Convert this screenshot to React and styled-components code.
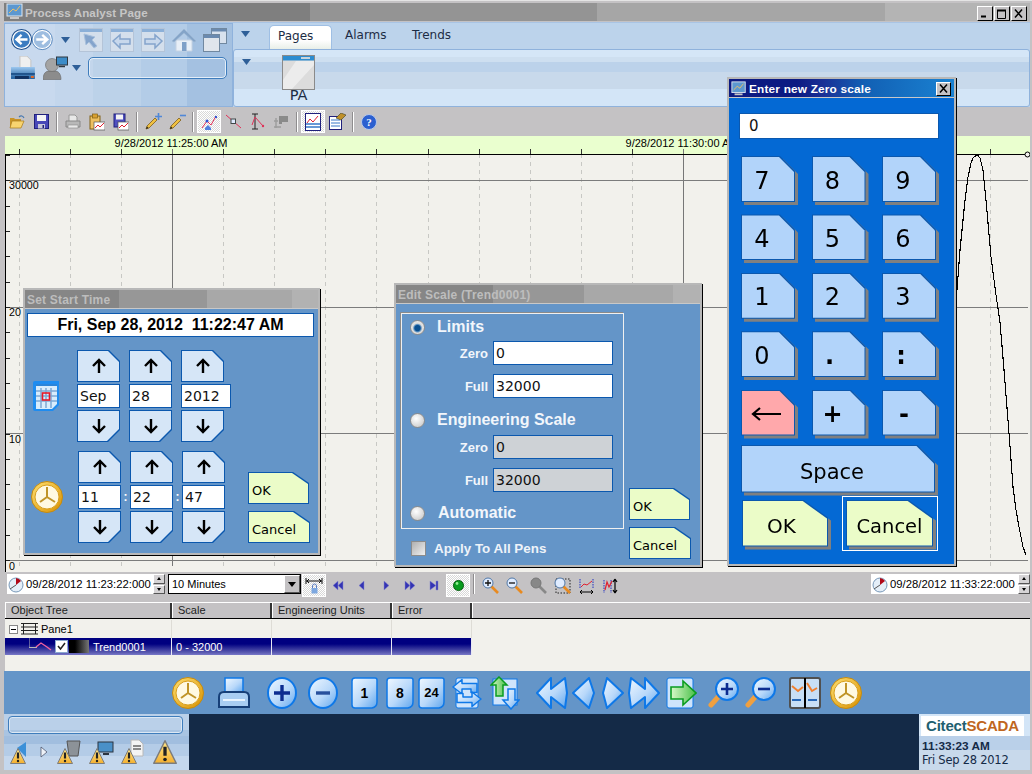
import React from 'react';
import styled, { createGlobalStyle } from 'styled-components';

const GlobalStyle = createGlobalStyle`
  html, body { margin: 0; padding: 0; background: #c4c2c4; }
  #root { width: 1032px; height: 774px; overflow: hidden; }
  * { box-sizing: border-box; }
`;

const arial = '"Liberation Sans", Arial, sans-serif';
const verdana = '"DejaVu Sans", Verdana, sans-serif';

const Screen = styled.div`
  position: relative;
  width: 1032px;
  height: 774px;
  display: flex;
  flex-direction: column;
  background: #c4c2c4;
  box-shadow: inset 0 1px 0 #e4e4e4;
  padding: 3px 2px 4px 4px;
  font-family: ${arial};
  overflow: hidden;
`;

const TitleBar = styled.div`
  flex: none;
  height: 18px;
  display: flex;
  align-items: center;
  padding-right: 3px;
  background: linear-gradient(90deg, #7f7f7f 0 306px, #949494 306px 593px, #a6a6a6 593px 881px, #b4b4b4 881px);
`;

const AppIcon = styled.svg`
  flex: none;
  margin-left: ${p => p.$ml || 0}px;
`;

const AppTitle = styled.span`
  margin-left: 1px;
  flex: 1;
  font: bold 11.6px ${arial};
  letter-spacing: 0.1px;
  color: #c6c6c6;
`;

const WinButton = styled.button`
  width: 16px;
  height: 15px;
  padding: 0;
  margin-left: 1px;
  align-self: flex-end;
  display: flex;
  align-items: center;
  justify-content: center;
  background: #c4c2c4;
  border: 1px solid;
  border-color: #fff #000 #000 #fff;
`;

const Ribbon = styled.div`
  flex: none;
  height: 85px;
  margin-top: 1px;
  display: flex;
  border-top: 1px solid #a9c4e4;
`;

const QuickPanel = styled.div`
  width: 229px;
  flex: none;
  padding: 3px 5px 0 6px;
  border: 1px solid #8fb2dc;
  background: linear-gradient(90deg, #c8d9ee 0 50px, #c3d6ec 50px 88px, #bcd2e9 88px 136px, #b3cce7 136px 182px, #a4c1e1 182px);
`;

const QuickRow = styled.div`
  display: flex;
  align-items: center;
  margin-bottom: ${p => p.$mb || 0}px;
`;

const QuickSlot = styled.span`
  display: flex;
  flex: none;
  align-self: ${p => p.$self || 'center'};
  margin-left: ${p => p.$ml || 0}px;
  margin-top: ${p => p.$mt || 0}px;
`;

const AddressBox = styled.div`
  width: 140px;
  height: 22px;
  margin-left: 7px;
  border: 1.5px solid #3f7dbc;
  border-radius: 5px;
  box-shadow: inset 0 0 0 1px #e4eef8;
`;

const PagesPanel = styled.div`
  flex: 1;
  display: flex;
  flex-direction: column;
  background: #bcd3eb;
`;

const TabStrip = styled.div`
  height: 26px;
  flex: none;
  display: flex;
  align-items: flex-end;
  padding-left: 8px;
`;

const Tab = styled.div`
  height: 24px;
  width: ${p => p.$w}px;
  margin-left: ${p => p.$ml || 0}px;
  padding: 3px 0 0 ${p => p.$pad}px;
  font: 12px ${verdana};
  color: #1c2c44;
  ${p => p.$active && `
    background: linear-gradient(#fff 0 60%, #e8efe8 100%);
    border: 1px solid #9fbfe4;
    border-bottom: 0;
    border-radius: 5px 5px 0 0;
  `}
`;

const PagesBody = styled.div`
  flex: 1;
  display: flex;
  padding: 5px 0 0 8px;
  border: 1px solid #8fb2dc;
  border-radius: 3px;
  background: linear-gradient(#d5e6f7 0 7px, #cedff0 7px 12px, #bcd2ea 12px 22px, #c8d9eb 22px 39px, #d3e5f7 39px);
`;

const PageItem = styled.div`
  display: flex;
  flex-direction: column;
  align-items: center;
  margin-left: 31px;
  font: 14.5px ${verdana};
  color: #1c2c44;
`;

const PageLabel = styled.span`
  margin-top: -2px;
  line-height: 15px;
`;

const ToolBar = styled.div`
  flex: none;
  height: 29px;
  display: flex;
  align-items: center;
  padding-left: 1px;
`;

const ToolSlot = styled.div`
  width: 24px;
  height: 23px;
  flex: none;
  display: flex;
  align-items: center;
  justify-content: center;
  ${p => p.$on && `
    border: 1px solid #fff;
    background: repeating-conic-gradient(#d8d8d8 0 25%, #ffffff 0 50%) 0 0 / 2px 2px;
  `}
`;

const ToolSep = styled.span`
  width: 2px;
  height: 20px;
  margin: 0 3px;
  flex: none;
  background: linear-gradient(90deg, #8e8c8e 50%, #fff 50%);
`;

const ChartWrap = styled.div`
  flex: none;
  height: 436px;
  margin-left: 1px;
`;

const ChartSvg = styled.svg`
  display: block;
  font-family: ${arial};
`;

const TrendBar = styled.div`
  flex: none;
  height: 30px;
  display: flex;
  align-items: flex-start;
  padding: 2px 0 0 3px;
`;

const DateBox = styled.div`
  width: ${p => p.$w || 146}px;
  height: 20px;
  flex: none;
  display: flex;
  align-items: center;
  gap: 2px;
  padding-left: 1px;
  margin-left: ${p => p.$ml || 0}px;
  background: #fff;
  font: 11.3px ${arial};
  color: #000;
  white-space: nowrap;
`;

const SpinStack = styled.div`
  width: 12px;
  height: 20px;
  flex: none;
  display: flex;
  flex-direction: column;
  gap: 1px;
`;

const SpinTiny = styled.div`
  flex: 1;
  display: flex;
  align-items: center;
  justify-content: center;
  background: #d6d4d6;
  border: 1px solid;
  border-color: #fff #555 #555 #fff;
  &::after {
    content: '';
    border: 2.5px solid transparent;
    ${p => (p.$down ? 'border-top: 3px solid #000; margin-top: 2px;' : 'border-bottom: 3px solid #000; margin-bottom: 2px;')}
  }
`;

const Combo = styled.div`
  width: 133px;
  height: 20px;
  flex: none;
  margin-left: 3px;
  display: flex;
  align-items: center;
  justify-content: space-between;
  padding-left: 3px;
  background: #fff;
  border: 1px solid #000;
  font: 11px ${arial};
`;

const ComboArrow = styled.span`
  width: 16px;
  height: 18px;
  display: flex;
  align-items: center;
  justify-content: center;
  background: #c4c2c4;
  border: 1px solid;
  border-color: #fff #555 #555 #fff;
  &::after {
    content: '';
    border: 4px solid transparent;
    border-top: 5px solid #000;
    margin-top: 4px;
  }
`;

const BarSlot = styled(ToolSlot)`
  margin-left: ${p => p.$ml || 0}px;
`;

const Spacer = styled.div`
  flex: 1;
`;

const TreePane = styled.div`
  flex: none;
  height: 69px;
  margin-left: 1px;
  background: #f2f1ec;
`;

const TreeHead = styled.div`
  height: 17px;
  margin-bottom: 1px;
  display: flex;
  background: #c4c2c4;
  border-top: 1px solid #fff;
  border-bottom: 1px solid #000;
`;

const HeadCell = styled.div`
  width: ${p => p.$w}px;
  flex: ${p => (p.$w ? 'none' : 1)};
  padding: 1px 0 0 6px;
  font: 11px ${arial};
  color: #222;
  border-right: ${p => (p.$w ? '2px solid #333' : 'none')};
  box-shadow: inset 1px 0 0 #fff;
`;

const TreeRow = styled.div`
  width: 467px;
  height: ${p => p.$h}px;
  display: flex;
  align-items: center;
  ${p => p.$selected && 'background: linear-gradient(#000080 0 35%, #5a5ab0 85%, #7878c8);'}
`;

const TreeCell = styled.div`
  width: ${p => p.$w}px;
  height: 100%;
  flex: none;
  display: flex;
  align-items: center;
  padding-left: ${p => p.$pad || 0}px;
  font: 11px ${arial};
  color: ${p => (p.$selected ? '#fff' : '#000')};
  border-right: 1px solid ${p => (p.$selected ? '#e8e8f4' : '#dedcd6')};
`;

const MinusBox = styled.span`
  width: 9px;
  height: 9px;
  margin: 0 3px 0 4px;
  display: flex;
  align-items: center;
  justify-content: center;
  border: 1px solid #888;
  background: #fff;
  &::after {
    content: '';
    width: 5px;
    height: 1px;
    background: #000;
  }
`;

const TreeIcon = styled.svg`
  flex: none;
  margin-right: ${p => p.$mr || 0}px;
`;

const TreeCheck = styled.span`
  width: 13px;
  height: 13px;
  flex: none;
  display: flex;
  margin-right: 1px;
  background: #fff;
  border: 1px solid #8aa8d0;
`;

const PenSwatch = styled.span`
  width: 20px;
  height: 13px;
  flex: none;
  margin-right: 4px;
  background: linear-gradient(90deg, #000 30%, #777);
`;

const ButtonStrip = styled.div`
  flex: none;
  height: 43px;
  display: flex;
  align-items: center;
  padding-left: 168px;
  background: #6495c8;
`;

const StripSlot = styled.div`
  position: relative;
  flex: none;
  display: flex;
  margin-left: ${p => p.$ml || 0}px;
`;

const PageNumber = styled.span`
  position: absolute;
  inset: 0;
  display: flex;
  align-items: center;
  justify-content: center;
  font: bold ${p => p.$size || 14}px ${arial};
  color: #000;
`;

const StatusBar = styled.div`
  flex: none;
  height: 56px;
  display: flex;
`;

const AlarmPanel = styled.div`
  width: 185px;
  flex: none;
  padding: 2px 0 0 4px;
  background: linear-gradient(#bad0e9 0 16px, #a9c4e2 16px 22px, #a1bedf 22px 30px, #b4cce7 30px 42px, #c4d7ed 42px);
`;

const AlarmBox = styled.div`
  width: 175px;
  height: 18px;
  border: 1.5px solid #3f7dbc;
  border-radius: 4px;
  box-shadow: inset 0 0 0 1px #dce8f4;
`;

const AlarmIcons = styled.svg`
  display: block;
  margin: 4px 0 0 -4px;
`;

const DarkPanel = styled.div`
  width: 730px;
  flex: none;
  background: #142a47;
`;

const ClockPanel = styled.div`
  flex: 1;
  padding: 2px 0 0 2px;
  background: linear-gradient(#d3e5f7 0 22px, #bad0e9 22px 36px, #c8d9eb 36px);
  color: #142a47;
`;

const Logo = styled.div`
  width: 103px;
  height: 20px;
  padding-left: 5px;
  background: #fff;
  font: bold 15px/20px ${arial};
  letter-spacing: -0.2px;
  white-space: nowrap;
`;

const LogoBrand = styled.span`
  color: ${p => p.$color};
`;

const ClockTime = styled.div`
  margin: 3px 0 0 1px;
  font: bold 11.8px/14px ${arial};
`;

const ClockDate = styled.div`
  margin-left: 1px;
  font: 11.5px/14px ${verdana};
  letter-spacing: -0.25px;
`;

/* dialogs float over the page like windows on a desktop */
const Dialog = styled.div`
  position: absolute;
  left: ${p => p.$x}px;
  top: ${p => p.$y}px;
  width: ${p => p.$w}px;
  height: ${p => p.$h}px;
  display: flex;
  flex-direction: column;
  background: ${p => p.$bg || '#6495c8'};
  border: 2px solid #b8b8b8;
  box-shadow: 1px 1px 0 #000;
`;

const DialogTitle = styled.div`
  flex: none;
  height: ${p => p.$h || 19}px;
  padding: 1px 0 0 2px;
  display: flex;
  align-items: center;
  font: bold 12px ${arial};
  letter-spacing: 0.2px;
  color: #bdbdbd;
  border-bottom: 1px solid #c8c8c8;
  background: linear-gradient(90deg, #868686 0 32%, #979797 32% 62%, #a8a8a8 62% 91%, #b2b2b2 91%);
`;

const KeypadTitle = styled(DialogTitle)`
  color: #fff;
  font-size: 11.8px;
  padding-right: 3px;
  gap: 2px;
  background: linear-gradient(90deg, #0c1a82 0 30%, #1a3096 42%, #1260b4 60%, #1a82d2 100%);
`;

const KeypadClose = styled(WinButton)`
  margin-left: auto;
  align-self: center;
  width: 15px;
  height: 14px;
`;

const CaptionText = styled.span`
  flex: 1;
`;

const StartBody = styled.div`
  flex: 1;
  padding: 4px 4px 0 2px;
`;

const DateDisplay = styled.div`
  height: 24px;
  display: flex;
  align-items: center;
  justify-content: center;
  white-space: pre;
  font: bold 16px ${arial};
  color: #000;
  background: #fff;
  border: 1px solid #0b58ae;
`;

const SpinRow = styled.div`
  display: flex;
  height: 92px;
  margin-top: ${p => p.$mt}px;
`;

const SpinIcon = styled.div`
  width: ${p => p.$w}px;
  flex: none;
  padding-left: ${p => p.$pad}px;
  display: flex;
  align-items: center;
`;

const SpinColumn = styled.div`
  width: 43px;
  flex: none;
  display: flex;
  flex-direction: column;
  gap: 2px;
`;

const Colon = styled.span`
  width: 9px;
  flex: none;
  align-self: center;
  text-align: center;
  font: bold 12px ${arial};
  color: #fff;
`;

const DialogActions = styled.div`
  margin-left: 23px;
  align-self: flex-end;
  display: flex;
  flex-direction: column;
  align-items: flex-start;
  gap: 7px;
`;

function shape({ $down, $cx = 13, $cy = 13 }) {
  return $down
    ? `polygon(0 0, 100% 0, 100% calc(100% - ${$cy}px), calc(100% - ${$cx}px) 100%, 0 100%)`
    : `polygon(0 0, calc(100% - ${$cx}px) 0, 100% ${$cy}px, 100% 100%, 0 100%)`;
}

const CutButton = styled.button`
  position: relative;
  flex: none;
  display: flex;
  align-items: center;
  justify-content: ${p => (p.$left ? 'flex-start' : 'center')};
  padding: ${p => p.$ty || 0}px ${p => p.$tx || 0}px 0 ${p => (p.$left ? 4 : 0)}px;
  width: ${p => p.$w}px;
  height: ${p => p.$h}px;
  border: 0;
  color: #000;
  font: ${p => p.$font || 13}px ${verdana};
  background: #0b58ae;
  clip-path: ${p => shape(p)};
  &::before {
    content: '';
    position: absolute;
    inset: 1px;
    background: ${p => p.$bg};
    clip-path: ${p => shape(p)};
  }
  & > * {
    position: relative;
  }
`;

const KeyGlyph = styled.span`
  font-weight: ${p => (p.$bold ? 'bold' : 'normal')};
`;

const ValueBox = styled.div`
  width: ${p => p.$w || 43}px;
  height: ${p => p.$h || 24}px;
  flex: none;
  display: flex;
  align-items: center;
  padding-left: ${p => p.$pad || 2}px;
  font: ${p => p.$font || 14}px ${verdana};
  color: #111;
  background: ${p => (p.$off ? '#ced2d6' : '#fff')};
  border: 1px solid #0b58ae;
`;

const ScaleBody = styled.div`
  flex: 1;
  display: flex;
  padding: 9px 6px 6px 5px;
`;

const ScaleLeft = styled.div`
  width: 228px;
  flex: none;
`;

const ScaleGroup = styled.div`
  width: 223px;
  height: 216px;
  padding: 0 0 0 8px;
  border: 1px solid #f0f0f0;
  box-shadow: -1px -1px 0 #8a8a8a;
`;

const RadioRow = styled.div`
  height: 26px;
  margin-top: ${p => p.$mt || 0}px;
  display: flex;
  align-items: center;
  gap: ${p => p.$gap || 12}px;
  font: bold 16px ${arial};
  color: #f2f6fb;
`;

const Radio = styled.span`
  width: 15px;
  height: 15px;
  flex: none;
  border-radius: 50%;
  border: 1px solid #8c8c8c;
  background: ${p => (p.$on
    ? 'radial-gradient(circle at 50% 55%, #0a4f90 0 28%, #4a86bc 36%, #dcdcdc 50%, #f4f4f4 100%)'
    : 'radial-gradient(circle at 40% 35%, #ffffff, #c8c8c8 90%)')};
`;

const FieldRow = styled.div`
  display: flex;
  align-items: center;
  height: 24px;
  margin-top: ${p => p.$mt || 0}px;
`;

const FieldLabel = styled.span`
  width: 83px;
  flex: none;
  padding-right: 5px;
  text-align: right;
  font: bold 13px ${arial};
  color: #f2f6fb;
`;

const ApplyRow = styled.div`
  display: flex;
  align-items: center;
  gap: 8px;
  margin: 12px 0 0 10px;
  font: bold 13.4px ${arial};
  color: #eef3f9;
`;

const CheckSquare = styled.span`
  width: 15px;
  height: 15px;
  flex: none;
  background: linear-gradient(135deg, #b0b0b0, #f0f0f0);
  border: 1px solid #8c8c8c;
`;

const ScaleActions = styled(DialogActions)`
  margin-left: 0;
`;

const KeypadBody = styled.div`
  flex: 1;
  padding: 15px 0 0 10px;
`;

const KeypadInput = styled(ValueBox)`
  width: 200px;
  height: 26px;
  padding-left: 9px;
  font-size: 15px;
`;

const KeyGrid = styled.div`
  display: grid;
  grid-template-columns: repeat(3, 54px);
  grid-auto-rows: 46px;
  gap: 12.4px 16.5px;
  margin: 17px 0 0 2px;
`;

const KeyShadow = styled.div`
  width: max-content;
  filter: drop-shadow(3px 3px 0 #808080);
`;

const SpaceKey = styled(KeyShadow)`
  margin: 9px 0 0 2px;
`;

const KeypadFooter = styled.div`
  display: flex;
  align-items: center;
  height: 55px;
  margin: 3px 0 0 3px;
`;

const FocusRing = styled.div`
  margin-left: 14px;
  padding: 3px 4px 3px 3px;
  border: 1px solid #fff;
`;

const HiddenDefs = styled.svg`
  position: absolute;
  width: 0;
  height: 0;
`;

const ArrowUp = () => (
  <svg width="16" height="16" viewBox="0 0 16 16"><path d="M8 15V2M2 8l6-6 6 6" fill="none" stroke="#000" strokeWidth="2.4" /></svg>
);
const ArrowDown = () => (
  <svg width="16" height="16" viewBox="0 0 16 16"><path d="M8 1v13M2 8l6 6 6-6" fill="none" stroke="#000" strokeWidth="2.4" /></svg>
);

const Spinner = ({ value, w, btn = '#d6e6f7' }) => (
  <SpinColumn>
    <CutButton $w={43} $h={32} $bg={btn} $cx={11} $cy={11}><ArrowUp /></CutButton>
    <ValueBox $w={w}>{value}</ValueBox>
    <CutButton $w={43} $h={32} $bg={btn} $down $cx={12} $cy={12}><ArrowDown /></CutButton>
  </SpinColumn>
);

/* shared fills used by the little drawings */
const SharedDefs = () => (
  <HiddenDefs>
    <defs>
      <linearGradient id="gBlue" x1="0" y1="0" x2="1" y2="1">
        <stop offset="0" stopColor="#f0f8ff" /><stop offset="0.55" stopColor="#b8d8fa" /><stop offset="1" stopColor="#5fa6ee" />
      </linearGradient>
      <linearGradient id="gGold" x1="0" y1="0" x2="1" y2="1">
        <stop offset="0" stopColor="#ffe070" /><stop offset="1" stopColor="#d89000" />
      </linearGradient>
      <linearGradient id="gGreen" x1="0" y1="0" x2="1" y2="0">
        <stop offset="0" stopColor="#d8f8c8" /><stop offset="1" stopColor="#48c048" />
      </linearGradient>
      <linearGradient id="gPrint" x1="0" y1="0" x2="0" y2="1">
        <stop offset="0" stopColor="#9cc8f0" /><stop offset="1" stopColor="#1c5c9c" />
      </linearGradient>
      <linearGradient id="gWarn" x1="0" y1="0" x2="0" y2="1">
        <stop offset="0" stopColor="#ffe78a" /><stop offset="1" stopColor="#f4b030" />
      </linearGradient>
    </defs>
  </HiddenDefs>
);

const ClockIcon = ({ s = 32 }) => (
  <svg width={s} height={s} viewBox="0 0 32 32">
    <circle cx="16" cy="16" r="15.5" fill="url(#gGold)" stroke="#c48a10" />
    <circle cx="16" cy="16" r="12" fill="#fff9e2" stroke="#d8a020" />
    <path d="M16 6v10l8 5M16 16l-7 5" fill="none" stroke="#c09428" strokeWidth="2" />
  </svg>
);

const CalendarIcon = () => (
  <svg width="28" height="32" viewBox="0 0 28 32">
    <path d="M3 1h24v24l-6 6H3a2 2 0 0 1-2-2V3a2 2 0 0 1 2-2z" fill="#1e8cf0" />
    <path d="M4 4h21v20l-5 5H4z" fill="#d8ecfc" />
    <path d="M4 5h21" stroke="#2b84d8" strokeWidth="2" />
    <path d="M4 11h21M4 16h21M4 21h21M9 8v20M14 8v20M19 8v20" stroke="#7ea8d4" strokeWidth="1.5" />
    <rect x="10.5" y="13" width="7" height="7" fill="none" stroke="#e81828" strokeWidth="1.6" />
  </svg>
);

const TriMark = () => (
  <svg width="9" height="6" viewBox="0 0 9 6"><path d="M0 0h9L4.5 6z" fill="#2e5f98" /></svg>
);

const NavButtons = () => (
  <svg width="49" height="25" viewBox="0 0 49 25">
    <circle cx="34" cy="12.5" r="10" fill="#9dbde0" stroke="#fff" strokeWidth="1.4" />
    <circle cx="34" cy="12.5" r="11" fill="none" stroke="#4e82ba" />
    <path d="M27.5 12.5h12M34 7.5l5.5 5-5.5 5" fill="none" stroke="#fff" strokeWidth="2.6" />
    <circle cx="11.5" cy="12.5" r="11.5" fill="#1f4f8c" />
    <circle cx="11.5" cy="12.5" r="9.6" fill="#3c7cc0" stroke="#fff" strokeWidth="1.4" />
    <path d="M18 12.5H6M11.5 7.5L6 12.5l5.5 5" fill="none" stroke="#fff" strokeWidth="2.6" />
  </svg>
);

const WindowArrow = ({ dir }) => (
  <svg width="24" height="24" viewBox="0 0 24 24">
    <rect x="0.5" y="0.5" width="23" height="23" fill="#d4dfec" stroke="#b4c4d8" />
    <rect x="1" y="1" width="22" height="3" fill="#8cb0d8" />
    {dir === 'cursor' && <path d="M5 6l11 3-3 3 5 6-3 2-5-6-3 3z" fill="#84a4cc" stroke="#a8c0dc" />}
    {dir === 'left' && <path d="M3 13l7-6v4h10v5H10v4z" fill="#c8d8ec" stroke="#84a4cc" strokeWidth="1.5" />}
    {dir === 'right' && <path d="M21 13l-7-6v4H4v5h10v4z" fill="#c8d8ec" stroke="#84a4cc" strokeWidth="1.5" />}
  </svg>
);

const HomeIcon = () => (
  <svg width="24" height="24" viewBox="0 0 24 24">
    <path d="M4 12h16v11H4z" fill="#e8eff7" stroke="#c4d2e2" />
    <path d="M0 13L12 1l12 12-2 1-10-9-10 9z" fill="#84a4c8" stroke="#a0b8d4" strokeWidth="0.6" />
    <rect x="10" y="14" width="4.5" height="9" fill="#7ea0c8" />
  </svg>
);

const WindowsIcon = () => (
  <svg width="24" height="24" viewBox="0 0 24 24">
    <rect x="8.5" y="0.5" width="15" height="15" fill="#d8e2ee" stroke="#7088a0" />
    <rect x="9" y="1" width="14" height="2.5" fill="#6a8ab0" />
    <rect x="0.5" y="6.5" width="16" height="17" fill="#dfe5ec" stroke="#7088a0" />
    <rect x="1" y="7" width="15" height="3" fill="#6a8ab0" />
  </svg>
);

const PrinterIcon = () => (
  <svg width="24" height="24" viewBox="0 0 24 24">
    <path d="M9 0h7l4 4v8H9z" fill="#f0f0f0" stroke="#c4c4c4" />
    <path d="M0 11h24v12H0z" fill="url(#gPrint)" />
    <path d="M0 18h24" stroke="#0f3f78" strokeWidth="1.4" />
    <rect x="4" y="20" width="14" height="3" fill="#103060" />
    <rect x="20" y="20" width="3" height="2" fill="#e0682a" />
  </svg>
);

const UserIcon = () => (
  <svg width="25" height="24" viewBox="0 0 25 24">
    <path d="M0 23.5c0-6 3-8.5 6-8.5h6c3 0 6 2.5 6 8.5z" fill="#8c8c8c" stroke="#666" strokeWidth="0.6" />
    <circle cx="9" cy="9" r="6.5" fill="#a4a4a4" stroke="#666" strokeWidth="0.6" />
    <rect x="13.5" y="1" width="11" height="8" fill="#3c8cc8" stroke="#303840" />
    <path d="M16 10.5h6" stroke="#303840" strokeWidth="1.5" />
  </svg>
);

const PageThumb = () => (
  <svg width="33" height="35" viewBox="0 0 33 35">
    <rect x="0.5" y="0.5" width="32" height="34" fill="#dcdcdc" stroke="#8a8a8a" />
    <rect x="1" y="1" width="31" height="4.5" fill="#2c8cd0" />
    <path d="M1 25L14 6h18v4L10 34H1z" fill="#ececec" />
    <rect x="19" y="2" width="9" height="2" fill="#c8d4dc" />
  </svg>
);

const FolderIcon = () => (
  <svg width="16" height="16" viewBox="0 0 16 16">
    <path d="M1 4h4l1 1h6v2H4l-3 7z" fill="#c89428" />
    <path d="M3 7h12l-3 7H1z" fill="#f8d470" stroke="#a87818" strokeWidth="0.7" />
    <path d="M10 3c2-2 4-1 5 1" fill="none" stroke="#4878b0" strokeWidth="1.2" />
  </svg>
);

const SaveIcon = () => (
  <svg width="15" height="15" viewBox="0 0 15 15">
    <rect x="0.5" y="0.5" width="14" height="14" fill="#4848b8" stroke="#20207c" />
    <rect x="3" y="1" width="9" height="6" fill="#f4f4f4" />
    <rect x="4" y="10" width="7" height="4.5" fill="#c8c8d8" />
    <rect x="8.5" y="11" width="1.5" height="3" fill="#20207c" />
  </svg>
);

const GreyPrintIcon = () => (
  <svg width="16" height="15" viewBox="0 0 16 15">
    <path d="M4 1h6l2 2v5H4z" fill="#e8e8e8" stroke="#989898" />
    <path d="M1 7h14v6H1z" fill="#b8b8b8" stroke="#888" />
    <rect x="3" y="11" width="10" height="3" fill="#e8e8e8" stroke="#888" strokeWidth="0.6" />
  </svg>
);

const ChartClipIcon = () => (
  <svg width="16" height="18" viewBox="0 0 16 18">
    <rect x="1" y="3" width="10" height="13" fill="#eec060" stroke="#806018" />
    <rect x="3.5" y="1" width="5" height="4" fill="#d8a030" stroke="#806018" strokeWidth="0.7" />
    <rect x="5" y="9" width="11" height="8" fill="#fff" stroke="#555" strokeWidth="0.7" />
    <path d="M6 15l3-3 2 2 4-4" fill="none" stroke="#e02030" />
  </svg>
);

const ChartSaveIcon = () => (
  <svg width="16" height="18" viewBox="0 0 16 18">
    <rect x="1" y="1" width="11" height="13" fill="#5050c0" stroke="#20207c" />
    <rect x="3" y="1.5" width="7" height="5" fill="#f4f4f4" />
    <rect x="5" y="9" width="11" height="8" fill="#fff" stroke="#555" strokeWidth="0.7" />
    <path d="M6 15l3-3 2 2 4-4" fill="none" stroke="#e02030" />
  </svg>
);

const PencilIcon = ({ plus }) => (
  <svg width="17" height="17" viewBox="0 0 17 17">
    <path d="M1 16l1-3 8-8 2 2-8 8z" fill="#f0c040" stroke="#705010" strokeWidth="0.7" />
    <path d="M1 16l1-2.5 1.5 1.5z" fill="#222" />
    <path d={plus ? 'M10 3.5h7M13.5 0v7' : 'M11 2.5h6'} stroke="#5088d8" strokeWidth="1.6" />
  </svg>
);

const PenPointsIcon = () => (
  <svg width="16" height="16" viewBox="0 0 16 16">
    <path d="M1 14l5-7 4 4 5-9" fill="none" stroke="#e03058" />
    <circle cx="6" cy="7" r="1.5" fill="#3050d0" /><circle cx="15" cy="3" r="1.2" fill="#3050d0" />
    <path d="M4 14l3-3 3 3v2H4z" fill="#5080e0" />
  </svg>
);

const CursorLineIcon = () => (
  <svg width="15" height="15" viewBox="0 0 15 15">
    <path d="M0 1l15 13" stroke="#e03058" />
    <rect x="5" y="5" width="4.5" height="4.5" fill="#dfeaff" stroke="#404848" />
  </svg>
);

const AxisPointsIcon = () => (
  <svg width="15" height="17" viewBox="0 0 15 17">
    <path d="M2 1h6M5 1v15M2 16h6" fill="none" stroke="#222" />
    <path d="M5 4L2 12M5 4l8 9" stroke="#e03058" />
    <circle cx="13" cy="13" r="1.2" fill="#e03058" />
  </svg>
);

const PinIcon = () => (
  <svg width="15" height="15" viewBox="0 0 15 15">
    <path d="M5 2h9v6H8v2H5z" fill="#8a8a8a" />
    <path d="M0 7h4M2 4v10M0 13h7" stroke="#9c9c9c" strokeWidth="1.4" />
  </svg>
);

const ChartListIcon = () => (
  <svg width="17" height="18" viewBox="0 0 17 18">
    <rect x="0.5" y="0.5" width="15" height="17" fill="#fff" stroke="#20207c" />
    <path d="M2 10l3-4 3 3 5-6" fill="none" stroke="#e02030" />
    <path d="M1 11h14M1 14h14" stroke="#3878c8" strokeWidth="1.4" />
  </svg>
);

const PropsIcon = () => (
  <svg width="17" height="17" viewBox="0 0 17 17">
    <rect x="0.5" y="3.5" width="12" height="13" fill="#fff" stroke="#20207c" />
    <path d="M2 7h9M2 10h9M2 13h9" stroke="#3878c8" />
    <path d="M7 5l5-5 5 2-5 5z" fill="#c09028" stroke="#404020" strokeWidth="0.6" />
  </svg>
);

const HelpIcon = () => (
  <svg width="16" height="16" viewBox="0 0 16 16">
    <circle cx="8" cy="8" r="7.5" fill="#2c60d0" stroke="#b8c8e8" />
    <text x="8" y="12" textAnchor="middle" fontSize="11" fontWeight="bold" fontFamily="Liberation Serif" fill="#fff">?</text>
  </svg>
);

const LockSpanIcon = () => (
  <svg width="18" height="18" viewBox="0 0 18 18">
    <path d="M1 4h16M1 1v6M17 1v6M2 4l2-2M2 4l2 2M16 4l-2-2M16 4l-2 2" stroke="#111" fill="none" />
    <rect x="6.5" y="11" width="6" height="5.5" fill="#7ea8e0" />
    <path d="M7.5 11V9a2 2 0 0 1 4 0v2" fill="none" stroke="#5a7cc0" />
  </svg>
);

const PlayIcon = ({ d }) => (
  <svg width="12" height="11" viewBox="0 0 12 11"><path d={d} fill="#3434b4" stroke="#8888cc" strokeWidth="0.5" /></svg>
);

const LedIcon = () => (
  <svg width="11" height="11" viewBox="0 0 11 11">
    <circle cx="5.5" cy="5.5" r="5" fill="#0a9c20" stroke="#065c10" />
    <circle cx="4" cy="3.5" r="1.4" fill="#90f090" />
  </svg>
);

const ZoomIcon = ({ sign, grey, box }) => (
  <svg width="17" height="17" viewBox="0 0 17 17">
    {box && <rect x="2" y="2" width="14" height="14" fill="none" stroke="#222" strokeDasharray="1.5 1.5" />}
    <path d="M9 9l7 7" stroke={grey ? '#888' : '#e88a20'} strokeWidth="2.6" />
    <circle cx="6" cy="6" r="5" fill={grey ? '#888' : '#e0ecff'} stroke={grey ? '#777' : '#5078a8'} />
    {sign && <path d={sign === '+' ? 'M3 6h6M6 3v6' : 'M3 6h6'} stroke="#111" strokeWidth="1.3" />}
  </svg>
);

const ScaleTimeIcon = () => (
  <svg width="15" height="16" viewBox="0 0 15 16">
    <path d="M1 1v10M14 1v10" stroke="#2030c0" strokeDasharray="1.5 1" />
    <path d="M2 9l3-3 3 1 5-4" fill="none" stroke="#e02030" />
    <path d="M1 14h13M1 14l2-2M1 14l2 2M14 14l-2-2M14 14l-2 2" fill="none" stroke="#000" />
  </svg>
);

const ScaleValueIcon = () => (
  <svg width="15" height="16" viewBox="0 0 15 16">
    <path d="M1 2v13M8 2v13" stroke="#2030c0" strokeDasharray="1.5 1" />
    <path d="M2 12l2-8 2 5 3-6" fill="none" stroke="#e02030" strokeWidth="1.2" />
    <path d="M12 1v14M12 1l-2 3M12 1l2 3M12 15l-2-3M12 15l2-3" fill="none" stroke="#000" strokeWidth="1.2" />
  </svg>
);

const DialClock = () => (
  <svg width="16" height="17" viewBox="0 0 16 17">
    <circle cx="8" cy="9" r="7" fill="#e4eef8" stroke="#7898b8" />
    <path d="M8 9V2a7 7 0 0 1 5 3z" fill="#b00818" />
    <path d="M8 9L2 13" stroke="#555" />
  </svg>
);

const StampIcon = () => (
  <svg width="32" height="32" viewBox="0 0 32 32">
    <path d="M7 1h18v15H7z" fill="url(#gBlue)" stroke="#0e78e8" strokeWidth="1.5" />
    <path d="M1 30V20q0-5 5-5h20q5 0 5 5v10z" fill="#a8cdf2" stroke="#163f78" strokeWidth="2" />
    <path d="M5 23h22" stroke="#e8f4ff" strokeWidth="2" />
  </svg>
);

const RoundSign = ({ sign }) => (
  <svg width="30" height="32" viewBox="0 0 30 32">
    <ellipse cx="15" cy="16" rx="14" ry="15" fill="url(#gBlue)" stroke="#0e78e8" strokeWidth="2" />
    <path d={sign === '+' ? 'M7 16h16M15 8v16' : 'M8 16h14'} stroke={sign === '+' ? '#0c2c90' : '#28509c'} strokeWidth="3.4" />
  </svg>
);

const PageShape = ({ w = 27 }) => (
  <svg width={w} height="32" viewBox={`0 0 ${w} 32`}>
    <path d={`M4 1h${w - 7}q2 0 2 2v22q0 5-5 6H4q-3 0-3-3V4q0-3 3-3z`} fill="url(#gBlue)" stroke="#0e78e8" strokeWidth="1.5" />
  </svg>
);

const SwapIcon = () => (
  <svg width="30" height="32" viewBox="0 0 30 32">
    <rect x="4" y="1" width="22" height="30" rx="2" fill="#cfe4fb" stroke="#0e78e8" />
    <path d="M1 10l9-7.5v4h15v9h-6v-3.5h-9v5z" fill="url(#gBlue)" stroke="#0e78e8" strokeWidth="1.5" strokeLinejoin="round" />
    <path d="M29 22l-9 7.5v-4H5v-9h6V20h9v-5z" fill="url(#gBlue)" stroke="#0e78e8" strokeWidth="1.5" strokeLinejoin="round" />
  </svg>
);

const UpDownIcon = () => (
  <svg width="30" height="34" viewBox="0 0 30 34">
    <rect x="3" y="3" width="24" height="26" fill="#cfe4fb" stroke="#0e78e8" />
    <path d="M9 1l8 8h-4v11H6V9H1z" fill="url(#gGreen)" stroke="#0a9c20" strokeWidth="1.5" />
    <path d="M21 33l8-9h-4V13h-7v11h-5z" fill="url(#gBlue)" stroke="#0e78e8" strokeWidth="1.5" />
  </svg>
);

const Chevron = ({ d, w }) => (
  <svg width={w} height="32" viewBox={`0 0 ${w} 32`}>
    <path d={d} fill="url(#gBlue)" stroke="#0e78e8" strokeWidth="2" strokeLinejoin="round" />
  </svg>
);

const GreenArrowIcon = () => (
  <svg width="31" height="32" viewBox="0 0 31 32">
    <rect x="1" y="1" width="26" height="30" rx="2" fill="#cfe4fb" stroke="#0e78e8" />
    <path d="M5 10h12V4l13 12-13 12v-6H5z" fill="url(#gGreen)" stroke="#0a9c20" strokeWidth="1.6" />
  </svg>
);

const BigZoomIcon = ({ plus }) => (
  <svg width="32" height="32" viewBox="0 0 32 32">
    <path d="M11 19L3 28" stroke="#f0a040" strokeWidth="5" strokeLinecap="round" />
    <circle cx="19" cy="12" r="11" fill="url(#gBlue)" stroke="#0e78e8" strokeWidth="2" />
    <path d={plus ? 'M13 12h12M19 6v12' : 'M13 12h12'} stroke="#0c2c90" strokeWidth="2.6" />
  </svg>
);

const CursorChartIcon = () => (
  <svg width="32" height="32" viewBox="0 0 32 32">
    <rect x="1" y="1" width="30" height="30" rx="2" fill="#c8dff6" stroke="#505050" strokeWidth="2" />
    <path d="M3 9l6 5 5-4M18 6l5 8 5-3" fill="none" stroke="#f08030" strokeWidth="2" />
    <path d="M3 23h9M19 23h9" stroke="#2868b8" strokeWidth="2" />
    <path d="M16 1v30" stroke="#000" strokeWidth="2" />
  </svg>
);

const Warn = ({ x, y, s = 16 }) => (
  <g transform={`translate(${x} ${y}) scale(${s / 16})`}>
    <path d="M8 0.5L15.5 15.5H0.5z" fill="url(#gWarn)" stroke="#7c7c7c" strokeWidth="1" strokeLinejoin="round" />
    <path d="M8 4.5v6" stroke="#222" strokeWidth="2.2" />
    <circle cx="8" cy="13" r="1.2" fill="#222" />
  </g>
);

// peak of the pen trace near the right edge, taken off the picture
const tracePoints = [
  [957, 290], [960, 250], [962, 230], [965, 200], [968, 177], [971, 163], [973, 158], [977, 154.5], [980, 158],
  [983, 170], [986, 200], [991, 257], [996, 295], [1000, 322], [1004, 370], [1009, 433], [1013, 487], [1016, 510],
  [1019, 527], [1023, 547], [1026, 555],
];

const TrendChart = () => {
  const ticks = [];
  for (let i = -3; i < 18; i++) ticks.push(Math.round(172 + 51.1 * i));
  const minor = [];
  for (let y = 560; y > 154; y -= 25.3) minor.push(Math.round(y));
  return (
    <ChartSvg width="1025" height="436" viewBox="5 136 1025 436">
      <rect x="5" y="136" width="1025" height="436" fill="#f2f1ec" />
      <rect x="5" y="136" width="1025" height="18" fill="#eaffcf" />
      {ticks.filter(x => x > 5).map(x => (
        <g key={x}>
          <path d={`M${x}.5 149V154`} stroke="#333" />
          {x !== 172 && x !== 683 && <path d={`M${x}.5 154V566`} stroke="#c8c8c4" strokeDasharray="4 4" />}
        </g>
      ))}
      {[172, 683].map(x => <path key={x} d={`M${x}.5 149V566`} stroke="#777" />)}
      {[180, 307, 433, 560].map(y => <path key={y} d={`M6 ${y}.5H1028`} stroke="#7c7c7c" />)}
      <path d="M5.5 154V572M5 154.5H1026" stroke="#000" fill="none" />
      {minor.map(y => <path key={y} d={`M6 ${y}.5H10`} stroke="#222" />)}
      <text x="171" y="147" textAnchor="middle" fontSize="11">9/28/2012 11:25:00 AM</text>
      <text x="682" y="147" textAnchor="middle" fontSize="11">9/28/2012 11:30:00 AM</text>
      <text x="9" y="189" fontSize="10.7">30000</text>
      <text x="9" y="316" fontSize="10.7">20</text>
      <text x="9" y="443" fontSize="10.7">10</text>
      <text x="9" y="570" fontSize="10.7">0</text>
      <polyline points={tracePoints.map(p => p.join(',')).join(' ')} fill="none" stroke="#000" strokeWidth="1.1" shapeRendering="crispEdges" />
      <circle cx="1027.5" cy="154.5" r="2.5" fill="#f2f1ec" stroke="#000" />
    </ChartSvg>
  );
};

const keys = [
  { k: '7' }, { k: '8' }, { k: '9' },
  { k: '4' }, { k: '5' }, { k: '6' },
  { k: '1' }, { k: '2' }, { k: '3' },
  { k: '0' }, { k: '.', bold: true, tx: 18 }, { k: ':', bold: true, tx: 16 },
];

const OkCancel = () => (
  <>
    <CutButton $w={61} $h={32} $bg="#ebfcc8" $left $ty={4} $cx={16} $cy={11}><span>OK</span></CutButton>
    <CutButton $w={62} $h={32} $bg="#ebfcc8" $left $ty={4} $cx={16} $cy={11}><span>Cancel</span></CutButton>
  </>
);

const MonitorGlyph = ({ s }) => (
  <AppIcon width={s} height={s} viewBox="0 0 18 18" $ml={s === 18 ? 2 : 0}>
    <rect x="1" y="1" width="15" height="12" fill="#5c98d0" stroke="#e0e8f0" />
    <path d="M3 10l4-4 3 2 4-5" stroke="#f0c060" fill="none" />
    <path d="M4 15h9" stroke="#c8c8c8" strokeWidth="2" />
  </AppIcon>
);

const App = () => (
  <>
    <GlobalStyle />
    <SharedDefs />
    <Screen>
      <TitleBar>
        <MonitorGlyph s={18} />
        <AppTitle>Process Analyst Page</AppTitle>
        <WinButton><svg width="10" height="9"><path d="M1 7.5h5" stroke="#000" strokeWidth="2" /></svg></WinButton>
        <WinButton><svg width="10" height="10"><path d="M.5 1.5h8v8h-8z" stroke="#000" fill="none" /><path d="M0 1.5h9" stroke="#000" strokeWidth="2" /></svg></WinButton>
        <WinButton><svg width="10" height="9"><path d="M1 .5l7 8M8 .5l-7 8" stroke="#000" strokeWidth="1.5" /></svg></WinButton>
      </TitleBar>

      <Ribbon>
        <QuickPanel>
          <QuickRow $mb={4}>
            <NavButtons />
            <QuickSlot $ml={5}><TriMark /></QuickSlot>
            <QuickSlot $ml={9}><WindowArrow dir="cursor" /></QuickSlot>
            <QuickSlot $ml={7}><WindowArrow dir="left" /></QuickSlot>
            <QuickSlot $ml={7}><WindowArrow dir="right" /></QuickSlot>
            <QuickSlot $ml={7}><HomeIcon /></QuickSlot>
            <QuickSlot $ml={7}><WindowsIcon /></QuickSlot>
          </QuickRow>
          <QuickRow>
            <PrinterIcon />
            <QuickSlot $ml={8}><UserIcon /></QuickSlot>
            <QuickSlot $ml={4}><TriMark /></QuickSlot>
            <AddressBox />
          </QuickRow>
        </QuickPanel>
        <PagesPanel>
          <TabStrip>
            <QuickSlot $self="flex-start" $mt={8}><TriMark /></QuickSlot>
            <Tab $active $w={63} $pad={8} $ml={19}>Pages</Tab>
            <Tab $w={67} $pad={13}>Alarms</Tab>
            <Tab $w={60} $pad={13}>Trends</Tab>
          </TabStrip>
          <PagesBody>
            <QuickSlot $self="flex-start" $mt={4}><TriMark /></QuickSlot>
            <PageItem>
              <PageThumb />
              <PageLabel>PA</PageLabel>
            </PageItem>
          </PagesBody>
        </PagesPanel>
      </Ribbon>

      <ToolBar>
        <ToolSlot><FolderIcon /></ToolSlot>
        <ToolSlot><SaveIcon /></ToolSlot>
        <ToolSep />
        <ToolSlot><GreyPrintIcon /></ToolSlot>
        <ToolSlot><ChartClipIcon /></ToolSlot>
        <ToolSlot><ChartSaveIcon /></ToolSlot>
        <ToolSep />
        <ToolSlot><PencilIcon plus /></ToolSlot>
        <ToolSlot><PencilIcon /></ToolSlot>
        <ToolSep />
        <ToolSlot $on><PenPointsIcon /></ToolSlot>
        <ToolSlot><CursorLineIcon /></ToolSlot>
        <ToolSlot><AxisPointsIcon /></ToolSlot>
        <ToolSlot><PinIcon /></ToolSlot>
        <ToolSep />
        <ToolSlot $on><ChartListIcon /></ToolSlot>
        <ToolSlot><PropsIcon /></ToolSlot>
        <ToolSep />
        <ToolSlot><HelpIcon /></ToolSlot>
      </ToolBar>

      <ChartWrap><TrendChart /></ChartWrap>

      <TrendBar>
        <DateBox><DialClock />09/28/2012 11:23:22:000</DateBox>
        <SpinStack><SpinTiny /><SpinTiny $down /></SpinStack>
        <Combo>10 Minutes<ComboArrow /></Combo>
        <BarSlot $on $ml={1}><LockSpanIcon /></BarSlot>
        <BarSlot><PlayIcon d="M6 1L1 5.5 6 10zM11 1L6 5.5l5 4.5z" /></BarSlot>
        <BarSlot><PlayIcon d="M8 1L3 5.5 8 10z" /></BarSlot>
        <BarSlot><PlayIcon d="M4 1l5 4.5L4 10z" /></BarSlot>
        <BarSlot><PlayIcon d="M1 1l5 4.5L1 10zM6 1l5 4.5L6 10z" /></BarSlot>
        <BarSlot><PlayIcon d="M2 1l6 4.5L2 10zM8 1h2v9H8z" /></BarSlot>
        <BarSlot $on><LedIcon /></BarSlot>
        <ToolSep />
        <ToolSlot><ZoomIcon sign="+" /></ToolSlot>
        <ToolSlot><ZoomIcon sign="-" /></ToolSlot>
        <ToolSlot><ZoomIcon grey /></ToolSlot>
        <ToolSlot><ZoomIcon box /></ToolSlot>
        <ToolSlot><ScaleTimeIcon /></ToolSlot>
        <ToolSlot><ScaleValueIcon /></ToolSlot>
        <Spacer />
        <DateBox $w={147}><DialClock />09/28/2012 11:33:22:000</DateBox>
        <SpinStack><SpinTiny /><SpinTiny $down /></SpinStack>
      </TrendBar>

      <TreePane>
        <TreeHead>
          <HeadCell $w={167}>Object Tree</HeadCell>
          <HeadCell $w={100}>Scale</HeadCell>
          <HeadCell $w={120}>Engineering Units</HeadCell>
          <HeadCell $w={80}>Error</HeadCell>
          <HeadCell />
        </TreeHead>
        <TreeRow $h={18}>
          <TreeCell $w={167}>
            <MinusBox />
            <TreeIcon width="17" height="15" viewBox="0 0 17 15" $mr={3}>
              <path d="M0 1.5h17M0 5h17M0 8.5h17M0 12h17M2.5 1v11M14.5 1v11" stroke="#222" />
            </TreeIcon>
            Pane1
          </TreeCell>
          <TreeCell $w={100} />
          <TreeCell $w={120} />
          <TreeCell $w={80} />
        </TreeRow>
        <TreeRow $h={17} $selected>
          <TreeCell $w={167} $selected $pad={24}>
            <TreeIcon width="26" height="17" viewBox="0 0 26 17">
              <path d="M0 0v9.5h8" stroke="#b8b8b8" fill="none" />
              <path d="M7 9l5-4 6 4 4 3" stroke="#f060a0" strokeWidth="1.4" fill="none" />
            </TreeIcon>
            <TreeCheck>
              <svg width="11" height="11" viewBox="0 0 11 11"><path d="M2 5l2.5 3L9 2" fill="none" stroke="#222" strokeWidth="1.5" /></svg>
            </TreeCheck>
            <PenSwatch />
            Trend0001
          </TreeCell>
          <TreeCell $w={100} $selected $pad={4}>0 - 32000</TreeCell>
          <TreeCell $w={120} $selected />
          <TreeCell $w={80} $selected />
        </TreeRow>
      </TreePane>

      <ButtonStrip>
        <ClockIcon />
        <StripSlot $ml={14}><StampIcon /></StripSlot>
        <StripSlot $ml={17}><RoundSign sign="+" /></StripSlot>
        <StripSlot $ml={11}><RoundSign sign="-" /></StripSlot>
        <StripSlot $ml={13}><PageShape /><PageNumber>1</PageNumber></StripSlot>
        <StripSlot $ml={8}><PageShape w={28} /><PageNumber>8</PageNumber></StripSlot>
        <StripSlot $ml={4}><PageShape /><PageNumber $size={13}>24</PageNumber></StripSlot>
        <StripSlot $ml={7}><SwapIcon /></StripSlot>
        <StripSlot $ml={8}><UpDownIcon /></StripSlot>
        <StripSlot $ml={16}><Chevron w={32} d="M1 16L15 1v11L29 1q2 15 2 15t-2 15L15 20v11z" /></StripSlot>
        <StripSlot $ml={4}><Chevron w={23} d="M1 16L17 1q5 15 5 15t-5 15z" /></StripSlot>
        <StripSlot $ml={7}><Chevron w={22} d="M21 16L5 1Q1 16 1 16t4 15z" /></StripSlot>
        <StripSlot $ml={4}><Chevron w={32} d="M31 16L17 1v11L3 1Q1 16 1 16t2 15l14-11v11z" /></StripSlot>
        <StripSlot $ml={6}><GreenArrowIcon /></StripSlot>
        <StripSlot $ml={11}><BigZoomIcon plus /></StripSlot>
        <StripSlot $ml={5}><BigZoomIcon /></StripSlot>
        <StripSlot $ml={12}><CursorChartIcon /></StripSlot>
        <StripSlot $ml={9}><ClockIcon /></StripSlot>
      </ButtonStrip>

      <StatusBar>
        <AlarmPanel>
          <AlarmBox />
          <AlarmIcons width="185" height="30" viewBox="4 738 185 30">
            <path d="M17 748l9-6v15z" fill="#3c90d8" />
            <Warn x={10} y={748} />
            <path d="M41 747v10l6-5z" fill="#eef2f8" stroke="#404860" strokeWidth="0.7" />
            <path d="M67 741h13l-2 15h-9z" fill="#8c9298" stroke="#555" />
            <Warn x={57} y={748} />
            <rect x="98" y="742" width="15" height="10" fill="#4a90c8" stroke="#2c3440" />
            <path d="M103 754h6" stroke="#2c3440" strokeWidth="2" />
            <Warn x={89} y={748} />
            <path d="M131 740h8l4 4v12h-12z" fill="#f4f4f4" stroke="#b8b8b8" />
            <path d="M133 746h8M133 749h8" stroke="#666" strokeWidth="1.4" />
            <Warn x={121} y={748} />
            <Warn x={153} y={740} s={24} />
          </AlarmIcons>
        </AlarmPanel>
        <DarkPanel />
        <ClockPanel>
          <Logo>
            <LogoBrand $color="#1e6070">Citect</LogoBrand>
            <LogoBrand $color="#c0661e">SCADA</LogoBrand>
          </Logo>
          <ClockTime>11:33:23 AM</ClockTime>
          <ClockDate>Fri Sep 28 2012</ClockDate>
        </ClockPanel>
      </StatusBar>

      <Dialog $x={23} $y={288} $w={297} $h={267}>
        <DialogTitle>Set Start Time</DialogTitle>
        <StartBody>
          <DateDisplay>Fri, Sep 28, 2012  11:22:47 AM</DateDisplay>
          <SpinRow $mt={13}>
            <SpinIcon $w={50} $pad={5}><CalendarIcon /></SpinIcon>
            <Spinner value="Sep" />
            <Colon />
            <Spinner value="28" />
            <Colon />
            <Spinner value="2012" w={50} />
          </SpinRow>
          <SpinRow $mt={9}>
            <SpinIcon $w={51} $pad={4}><ClockIcon /></SpinIcon>
            <Spinner value="11" />
            <Colon>:</Colon>
            <Spinner value="22" />
            <Colon>:</Colon>
            <Spinner value="47" />
            <DialogActions><OkCancel /></DialogActions>
          </SpinRow>
        </StartBody>
      </Dialog>

      <Dialog $x={394} $y={283} $w={308} $h={284}>
        <DialogTitle>Edit Scale (Trend0001)</DialogTitle>
        <ScaleBody>
          <ScaleLeft>
            <ScaleGroup>
              <RadioRow><Radio $on />Limits</RadioRow>
              <FieldRow $mt={1}><FieldLabel>Zero</FieldLabel><ValueBox $w={120}>0</ValueBox></FieldRow>
              <FieldRow $mt={9}><FieldLabel>Full</FieldLabel><ValueBox $w={120}>32000</ValueBox></FieldRow>
              <RadioRow $mt={9}><Radio />Engineering Scale</RadioRow>
              <FieldRow $mt={2}><FieldLabel>Zero</FieldLabel><ValueBox $w={120} $off>0</ValueBox></FieldRow>
              <FieldRow $mt={9}><FieldLabel>Full</FieldLabel><ValueBox $w={120} $off>32000</ValueBox></FieldRow>
              <RadioRow $mt={8} $gap={13}><Radio />Automatic</RadioRow>
            </ScaleGroup>
            <ApplyRow><CheckSquare />Apply To All Pens</ApplyRow>
          </ScaleLeft>
          <ScaleActions><OkCancel /></ScaleActions>
        </ScaleBody>
      </Dialog>

      <Dialog $x={727} $y={77} $w={229} $h={489} $bg="#0469d4">
        <KeypadTitle $h={19}>
          <MonitorGlyph s={16} />
          <CaptionText>Enter new Zero scale</CaptionText>
          <KeypadClose><svg width="10" height="9"><path d="M1 .5l7 8M8 .5l-7 8" stroke="#000" strokeWidth="1.5" /></svg></KeypadClose>
        </KeypadTitle>
        <KeypadBody>
          <KeypadInput>0</KeypadInput>
          <KeyGrid>
            {keys.map(({ k, bold, tx = 12 }) => (
              <KeyShadow key={k}>
                <CutButton $w={54} $h={46} $bg="#b2d4fa" $font={24} $tx={tx} $ty={3} $cx={15} $cy={15}>
                  <KeyGlyph $bold={bold}>{k}</KeyGlyph>
                </CutButton>
              </KeyShadow>
            ))}
            <KeyShadow>
              <CutButton $w={54} $h={46} $bg="#ffa8ab" $tx={4} $ty={3} $cx={15} $cy={15}>
                <svg width="32" height="16" viewBox="0 0 32 16"><path d="M31 8H3M10 2L3 8l7 6" fill="none" stroke="#000" strokeWidth="2.2" /></svg>
              </CutButton>
            </KeyShadow>
            <KeyShadow><CutButton $w={54} $h={46} $bg="#b2d4fa" $font={24} $tx={12} $ty={3} $cx={15} $cy={15}><KeyGlyph $bold>+</KeyGlyph></CutButton></KeyShadow>
            <KeyShadow><CutButton $w={54} $h={46} $bg="#b2d4fa" $font={24} $tx={10} $ty={3} $cx={15} $cy={15}><KeyGlyph $bold>-</KeyGlyph></CutButton></KeyShadow>
          </KeyGrid>
          <SpaceKey>
            <CutButton $w={194} $h={48} $bg="#b2d4fa" $font={21} $tx={12} $ty={7} $cx={18} $cy={18}><span>Space</span></CutButton>
          </SpaceKey>
          <KeypadFooter>
            <KeyShadow><CutButton $w={86} $h={47} $bg="#ebfcc8" $font={20} $tx={7} $ty={6} $cx={25} $cy={18}><span>OK</span></CutButton></KeyShadow>
            <FocusRing>
              <KeyShadow><CutButton $w={87} $h={47} $bg="#ebfcc8" $font={19.5} $ty={6} $cx={25} $cy={18}><span>Cancel</span></CutButton></KeyShadow>
            </FocusRing>
          </KeypadFooter>
        </KeypadBody>
      </Dialog>
    </Screen>
  </>
);

export default App;
